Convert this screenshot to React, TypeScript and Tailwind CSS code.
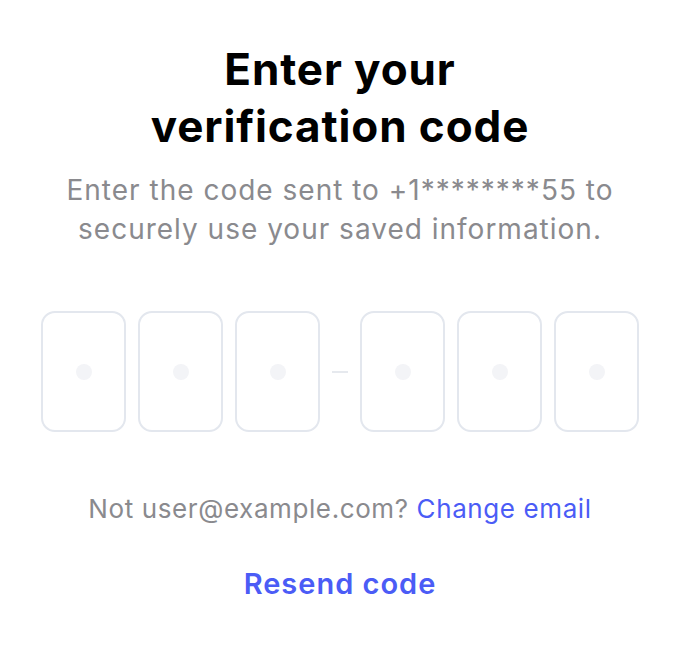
const SLOTS = [0, 1, 2];

function CodeBox() {
  return (
    <div className="flex h-[121px] w-[85px] items-center justify-center rounded-[14px] border-2 border-[#e3e7ee] bg-white">
      <span className="h-4 w-4 rounded-full bg-[#f3f4f7]" />
    </div>
  );
}

export default function App() {
  return (
    <div className="flex min-h-[658px] w-[680px] flex-col items-center bg-white pt-[41px] font-['Inter','Liberation_Sans',sans-serif] antialiased">
      <h1 className="text-center text-[44px] leading-[57px] font-bold tracking-[0.9px] text-black">
        Enter your
        <br />
        verification code
      </h1>
      <p className="mt-[16px] text-center text-[28px] leading-[39px] tracking-[1px] text-[#8a8a8e]">
        Enter the code sent to +1********55 to
        <br />
        securely use your saved information.
      </p>

      <div className="mt-[62px] flex items-center gap-[12px]">
        {SLOTS.map((i) => (
          <CodeBox key={`a${i}`} />
        ))}
        <span className="h-[2px] w-[16px] bg-[#e6e9ee]" />
        {SLOTS.map((i) => (
          <CodeBox key={`b${i}`} />
        ))}
      </div>

      <p className="mt-[60px] text-[26px] leading-[34px] tracking-[0.6px] text-[#8a8a8e]">
        Not user@example.com?{" "}
        <button type="button" className="text-[#4b5cf6]">
          Change email
        </button>
      </p>

      <button type="button" className="mt-[40px] text-[29px] leading-[36px] font-semibold tracking-[1px] text-[#4b5cf6]">
        Resend code
      </button>
    </div>
  );
}
